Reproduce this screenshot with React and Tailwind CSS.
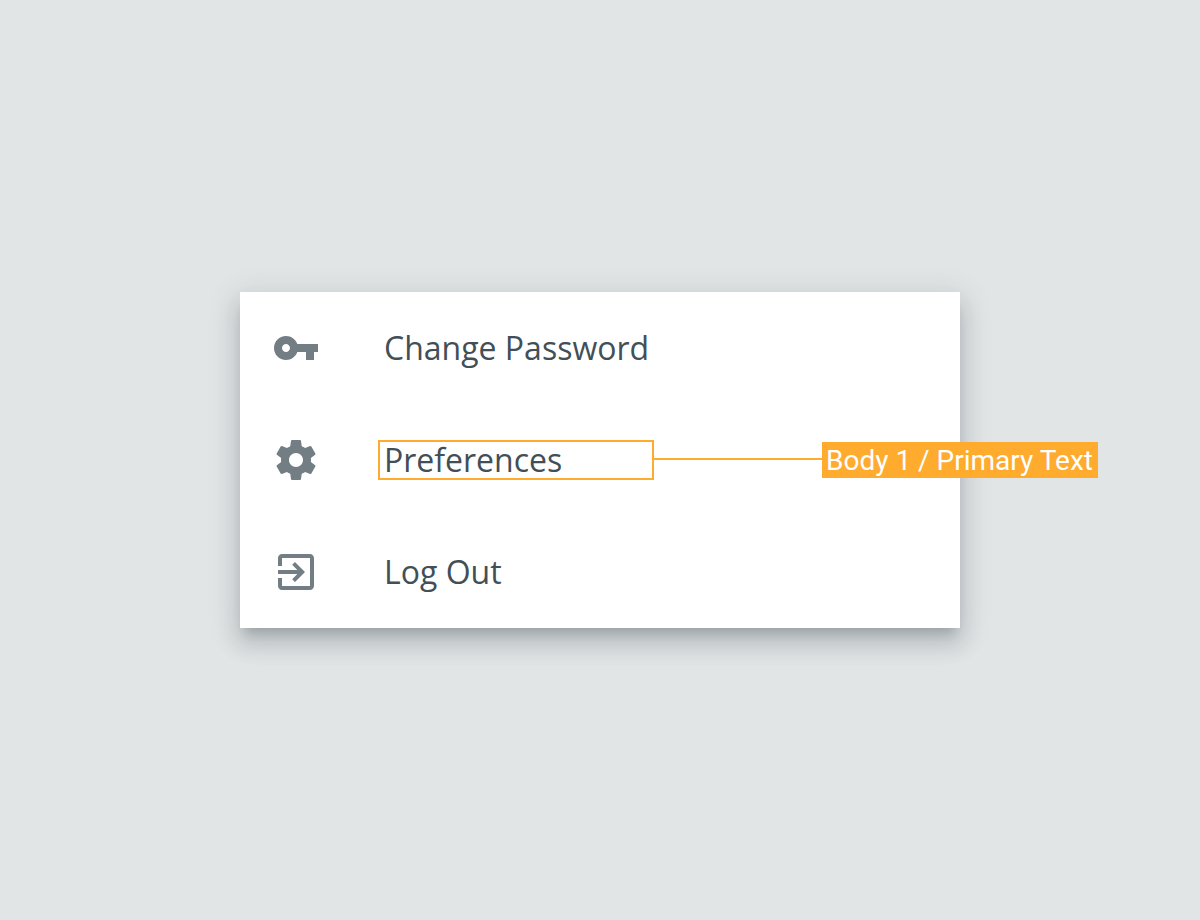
const items = [
  {
    label: 'Change Password',
    path: 'M12.65 10C11.83 7.67 9.61 6 7 6c-3.31 0-6 2.69-6 6s2.69 6 6 6c2.61 0 4.83-1.67 5.65-4H17v4h4v-4h2v-4H12.65zM7 14c-1.1 0-2-.9-2-2s.9-2 2-2 2 .9 2 2-.9 2-2 2z',
  },
  {
    label: 'Preferences',
    note: 'Body 1 / Primary Text',
    path: 'M19.43 12.98c.04-.32.07-.64.07-.98s-.03-.66-.07-.98l2.11-1.65c.19-.15.24-.42.12-.64l-2-3.46c-.12-.22-.39-.3-.61-.22l-2.49 1c-.52-.4-1.08-.73-1.69-.98l-.38-2.65C14.46 2.18 14.25 2 14 2h-4c-.25 0-.46.18-.49.42l-.38 2.65c-.61.25-1.17.59-1.69.98l-2.49-1c-.23-.09-.49 0-.61.22l-2 3.46c-.13.22-.07.49.12.64l2.11 1.65c-.04.32-.07.65-.07.98s.03.66.07.98l-2.11 1.65c-.19.15-.24.42-.12.64l2 3.46c.12.22.39.3.61.22l2.49-1c.52.4 1.08.73 1.69.98l.38 2.65c.03.24.24.42.49.42h4c.25 0 .46-.18.49-.42l.38-2.65c.61-.25 1.17-.59 1.69-.98l2.49 1c.23.09.49 0 .61-.22l2-3.46c.12-.22.07-.49-.12-.64l-2.11-1.65zM12 15.5c-1.93 0-3.5-1.57-3.5-3.5s1.57-3.5 3.5-3.5 3.5 1.57 3.5 3.5-1.57 3.5-3.5 3.5z',
  },
  {
    label: 'Log Out',
    path: 'M10.09 15.59L11.5 17l5-5-5-5-1.41 1.41L12.67 11H3v2h9.67l-2.58 2.59zM19 3H5c-1.11 0-2 .9-2 2v4h2V5h14v14H5v-4H3v4c0 1.1.89 2 2 2h14c1.1 0 2-.9 2-2V5c0-1.1-.9-2-2-2z',
  },
];

function Annotation({ text }) {
  return (
    <span className="pointer-events-none absolute top-0 left-full flex items-center">
      <span className="-mt-0.5 h-0.5 w-[170px] bg-[#ffab2d]" />
      <span className="h-9 w-[276px] bg-[#ffab2d] px-1 font-['Roboto',sans-serif] text-[28px] leading-[38px] text-white">
        {text}
      </span>
    </span>
  );
}

function MenuItem({ label, path, note }) {
  return (
    <li>
      <button type="button" className="flex h-28 w-full items-center gap-[58px] px-8 text-left whitespace-nowrap">
        <svg viewBox="0 0 24 24" className="size-12 shrink-0 fill-[#727d84]" aria-hidden="true">
          <path d={path} />
        </svg>
        <span
          className={
            note
              ? 'relative h-10 w-[276px] border-2 border-[#ffab2d] px-1 leading-9'
              : 'relative h-10 w-[276px] border-2 border-transparent px-1 leading-9'
          }
        >
          {label}
          {note && <Annotation text={note} />}
        </span>
      </button>
    </li>
  );
}

export default function App() {
  return (
    <main className="flex min-h-screen items-center justify-center overflow-hidden bg-[#e1e5e6]">
      <ul className="w-full max-w-[720px] bg-white font-['Open_Sans',sans-serif] text-[32px] text-[#424f57] shadow-[0_10px_10px_-6px_rgba(38,50,56,0.2),0_16px_20px_2px_rgba(38,50,56,0.14),0_6px_28px_4px_rgba(38,50,56,0.12)]">
        {items.map((item) => (
          <MenuItem key={item.label} {...item} />
        ))}
      </ul>
    </main>
  );
}
